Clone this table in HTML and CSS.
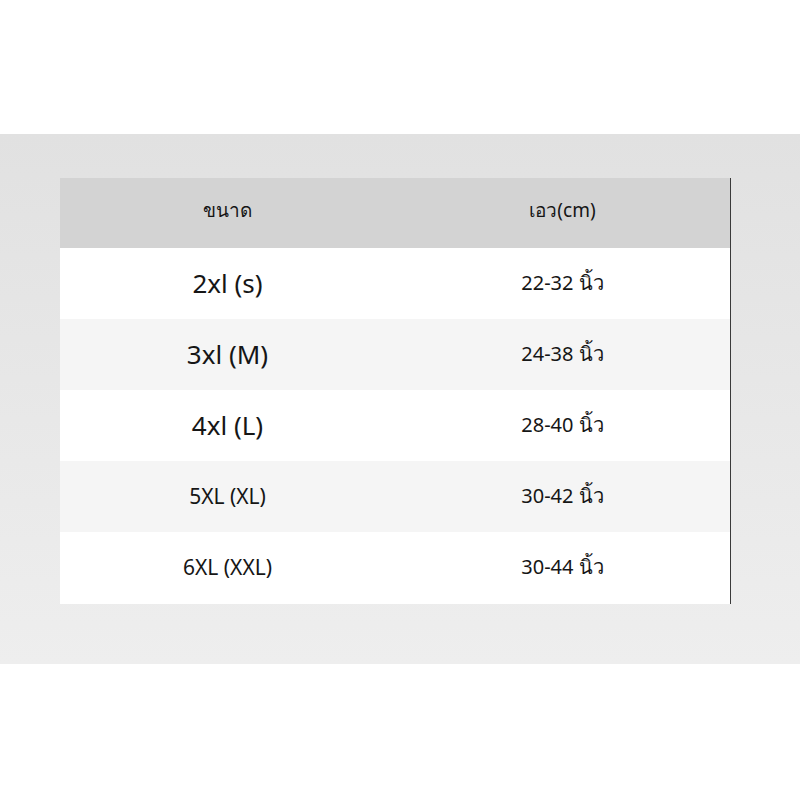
FILE: index.html
```html
<!DOCTYPE html>
<html lang="th">
<head>
<meta charset="utf-8">
<link rel="stylesheet" href="styles.css">
</head>
<body>
<div class="page">
  <div class="band">
    <div class="table">
      <div class="row head">
        <div class="cell">ขนาด</div>
        <div class="cell">เอว(cm)</div>
      </div>
      <div class="row">
        <div class="cell big">2xl (s)</div>
        <div class="cell">22-32 นิ้ว</div>
      </div>
      <div class="row alt">
        <div class="cell big">3xl (M)</div>
        <div class="cell">24-38 นิ้ว</div>
      </div>
      <div class="row">
        <div class="cell big">4xl (L)</div>
        <div class="cell">28-40 นิ้ว</div>
      </div>
      <div class="row alt">
        <div class="cell small">5XL (XL)</div>
        <div class="cell">30-42 นิ้ว</div>
      </div>
      <div class="row last">
        <div class="cell small">6XL (XXL)</div>
        <div class="cell">30-44 นิ้ว</div>
      </div>
    </div>
  </div>
</div>
</body>
</html>
```

FILE: styles.css
```css
html, body {
  margin: 0;
  padding: 0;
  background: #ffffff;
}
.page {
  width: 800px;
  height: 800px;
  padding-top: 134px;
  box-sizing: border-box;
  font-family: "Noto Sans", "Open Sans", "DejaVu Sans", sans-serif;
  color: #161616;
}
.band {
  height: 530px;
  background: linear-gradient(#e1e1e1, #eeeeee);
  padding: 44px 0 0 60px;
  box-sizing: border-box;
}
.table {
  width: 670px;
  border-right: 1px solid #3a3a3a;
}
.row {
  display: grid;
  grid-template-columns: 335px 335px;
  height: 71px;
  align-items: center;
  background: #ffffff;
}
.row.head {
  height: 70px;
  background: #d3d3d3;
}
.row.alt {
  background: #f5f5f5;
}
.row.last {
  height: 72px;
}
.cell {
  text-align: center;
  font-size: 20px;
  padding-bottom: 2px;
}
.row.head .cell {
  font-size: 19px;
  padding-bottom: 6px;
}
.cell.big {
  font-size: 26px;
}
.cell.small {
  font-size: 21px;
}
```
